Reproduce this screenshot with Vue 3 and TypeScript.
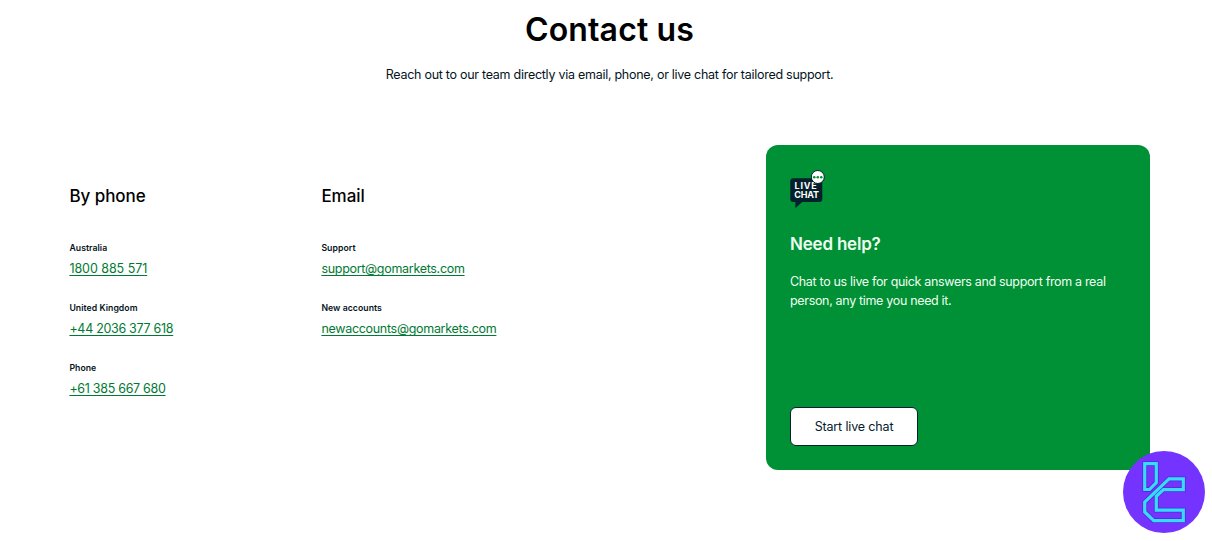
<script setup lang="ts">
interface ContactItem {
  label: string
  value: string
  href: string
  local?: boolean
}

interface ContactGroup {
  title: string
  items: ContactItem[]
}

const groups: ContactGroup[] = [
  {
    title: 'By phone',
    items: [
      { label: 'Australia', value: '1800 885 571', href: 'tel:1800885571', local: true },
      { label: 'United Kingdom', value: '+44 2036 377 618', href: 'tel:+442036377618' },
      { label: 'Phone', value: '+61 385 667 680', href: 'tel:+61385667680' },
    ],
  },
  {
    title: 'Email',
    items: [
      { label: 'Support', value: 'support@gomarkets.com', href: 'mailto:support@gomarkets.com' },
      { label: 'New accounts', value: 'newaccounts@gomarkets.com', href: 'mailto:newaccounts@gomarkets.com' },
    ],
  },
]
</script>

<template>
  <main class="contact-page">
    <header class="intro">
      <h1 class="title">Contact us</h1>
      <p class="subtitle">Reach out to our team directly via email, phone, or live chat for tailored support.</p>
    </header>

    <div class="content">
      <section v-for="group in groups" :key="group.title" class="group">
        <h2 class="group-title">{{ group.title }}</h2>
        <div v-for="item in group.items" :key="item.label" class="item">
          <span class="item-label">{{ item.label }}</span>
          <a class="item-link" :class="{ local: item.local }" :href="item.href">{{ item.value }}</a>
        </div>
      </section>

      <aside class="help-card">
        <svg class="chat-icon" viewBox="0 0 36 40">
          <path d="M3.3 9.2h26a3 3 0 0 1 3 3v17.8a3 3 0 0 1-3 3H12.2L5.4 39V33H3.3a3 3 0 0 1-3-3v-17.8a3 3 0 0 1 3-3z" fill="#04202c" />
          <text x="4.6" y="20" textLength="22" class="chat-text">LIVE</text>
          <text x="4.3" y="29.3" textLength="24.6" class="chat-text">CHAT</text>
          <circle cx="27.8" cy="8" r="6.5" fill="#fff" stroke="#04202c" stroke-width="1" />
          <g fill="#009035">
            <circle cx="24.3" cy="8.2" r="1.3" />
            <circle cx="27.8" cy="8.2" r="1.3" />
            <circle cx="31.3" cy="8.2" r="1.3" />
          </g>
        </svg>
        <h2 class="help-title">Need help?</h2>
        <p class="help-text">Chat to us live for quick answers and support from a real person, any time you need it.</p>
        <button class="chat-button" type="button">Start live chat</button>
      </aside>
    </div>

    <div class="badge">
      <svg viewBox="0 0 82 82" width="82" height="82" fill="none">
        <g stroke="#5a28d0" stroke-width="4.8">
          <path d="M21.7 38.5V12.7H33.3V31.5L26.5 38.5z" />
          <path d="M46 27.8H60.3V38.6H40.5L33.3 45.3V59.2H60.3V69.7H30.8L21.7 61V51.2z" />
        </g>
        <g stroke="#35dcff" stroke-width="3.2">
          <path d="M21.7 38.5V12.7H33.3V31.5L26.5 38.5z" />
          <path d="M46 27.8H60.3V38.6H40.5L33.3 45.3V59.2H60.3V69.7H30.8L21.7 61V51.2z" />
        </g>
      </svg>
    </div>
  </main>
</template>

<style>
body {
  margin: 0;
  background: #fff;
}
</style>

<style scoped>
.contact-page {
  position: relative;
  box-sizing: border-box;
  width: 1212px;
  height: 541px;
  padding: 10px 62px 0 69px;
  overflow: hidden;
  font-family: Inter, "Liberation Sans", sans-serif;
  color: #04141c;
}

h1,
h2,
p {
  margin: 0;
}

.intro {
  text-align: center;
}

.title {
  font-size: 32px;
  line-height: 40px;
  font-weight: 560;
  letter-spacing: 0.15px;
  color: #000;
}

.subtitle {
  margin-top: 15px;
  font-size: 12.5px;
  line-height: 20px;
  letter-spacing: -0.27px;
  white-space: nowrap;
}

.content {
  display: grid;
  grid-template-columns: 252px 1fr 384px;
  align-items: start;
  margin-top: 60px;
}

.group {
  padding: 39px 0 0 0.4px;
}

.group-title {
  margin-bottom: 34px;
  font-size: 17px;
  line-height: 24px;
  font-weight: 530;
  letter-spacing: -0.05px;
  color: #000;
}

.item {
  display: flex;
  flex-direction: column;
  align-items: flex-start;
  height: 60.2px;
}

.item-label {
  font-size: 8.7px;
  line-height: 12px;
  font-weight: 600;
  letter-spacing: 0.05px;
}

.item-link {
  margin-top: 5px;
  font-size: 12.5px;
  line-height: 20px;
  letter-spacing: -0.3px;
  color: #007a33;
  text-decoration: underline;
  text-decoration-thickness: 1px;
  text-decoration-skip-ink: none;
  text-underline-offset: 2px;
}

.item-link.local {
  letter-spacing: -0.05px;
}

.help-card {
  box-sizing: border-box;
  display: flex;
  flex-direction: column;
  align-items: flex-start;
  height: 325px;
  padding: 24px;
  border-radius: 12px;
  background: #009035;
  color: #effff0;
}

.chat-icon {
  width: 36px;
  height: 40px;
}

.chat-text {
  font-family: Inter, "Liberation Sans", sans-serif;
  font-size: 9px;
  font-weight: 700;
  fill: #fff;
}

.help-title {
  margin-top: 23px;
  font-size: 17px;
  line-height: 24px;
  font-weight: 600;
  letter-spacing: -0.2px;
}

.help-text {
  margin-top: 16px;
  margin-right: -12px;
  font-size: 12.5px;
  line-height: 19px;
  letter-spacing: -0.33px;
}

.chat-button {
  width: 128px;
  height: 39px;
  margin-top: auto;
  padding: 0 0 1px;
  border: 1px solid #04202c;
  border-radius: 6px;
  background: #fff;
  font-family: inherit;
  font-size: 12.5px;
  letter-spacing: -0.15px;
  color: #04202c;
}

.badge {
  position: absolute;
  left: 1123px;
  top: 451px;
  width: 82px;
  height: 82px;
  border-radius: 50%;
  background: #7433ff;
}
</style>
